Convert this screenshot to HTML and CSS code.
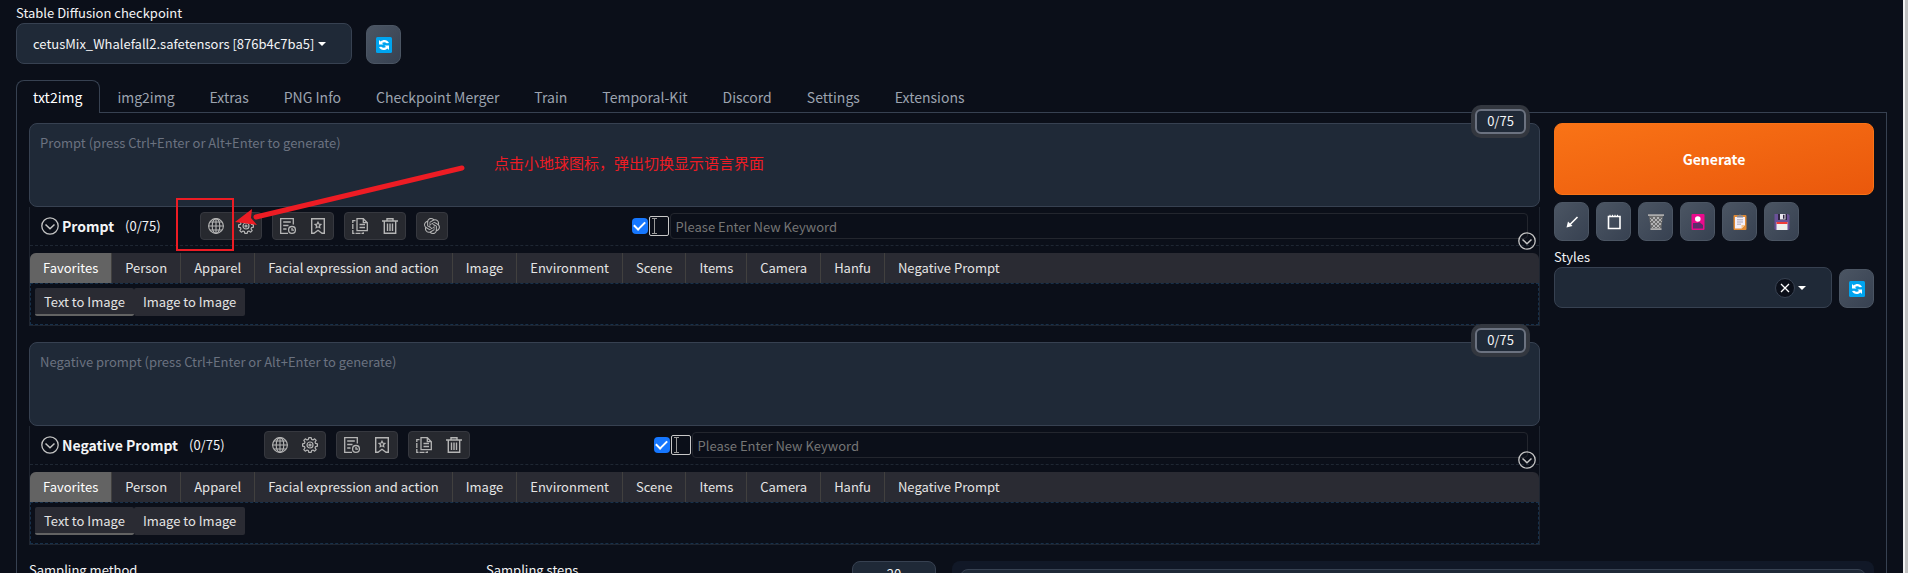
FILE: index.html
```html
<!DOCTYPE html>
<html lang="en">
<head>
<meta charset="utf-8">
<title>Stable Diffusion</title>
<link rel="stylesheet" href="styles.css">
</head>
<body>
<svg class="defs" aria-hidden="true">
  <defs>
    <symbol id="refresh" viewBox="0 0 16 16">
      <rect width="16" height="16" rx="1.500" fill="#00a4ef"/>
      <path d="M3 3v4.500h4.500L6 6C7.500 4.800 9.500 5 10.700 6.300L13 6C11.500 2.800 7.500 2 4.600 4.600Z" fill="#fff"/>
      <path d="M13 13V8.500H8.500L10 10C8.500 11.200 6.500 11 5.300 9.700L3 10C4.500 13.200 8.500 14 11.400 11.400Z" fill="#fff"/>
    </symbol>
    <symbol id="chevron" viewBox="0 0 18 18">
      <circle cx="9" cy="9" r="8.200" fill="none" stroke="#c4c4c4" stroke-width="1.300"/>
      <path d="M4.500 7.500 9 11.700l4.500-4.200" fill="none" stroke="#c4c4c4" stroke-width="1.500"/>
    </symbol>
    <symbol id="globe" viewBox="1 1 16 16">
      <g fill="none" stroke="#b5b5b5" stroke-width="1.100"><circle cx="9" cy="9" r="7.400"/><ellipse cx="9" cy="9" rx="3.800" ry="7.400"/><path d="M9 1.500v15M1.500 9h15M2.700 5h12.600M2.700 13h12.600"/></g>
    </symbol>
    <symbol id="gear" viewBox="1 1 16 16">
      <g fill="none" stroke="#b5b5b5" stroke-width="1.200" stroke-linejoin="round"><path d="M7.800 1.600h2.400l.4 1.800 1.400.6 1.700-1.200 1.500 1.500L14 6l.6 1.400 1.800.4v2.400l-1.800.4L14 12l1.200 1.700-1.500 1.500L12 14l-1.400.6-.4 1.800H7.800l-.4-1.800L6 14l-1.700 1.200-1.500-1.500L4 12l-.6-1.400-1.800-.4V7.800l1.800-.4L4 6 2.800 4.300l1.500-1.500L6 4l1.400-.6Z"/><circle cx="9" cy="9" r="3"/><circle cx="9" cy="9" r="1"/></g>
    </symbol>
    <symbol id="history" viewBox="1 1 16 16">
      <g fill="none" stroke="#b5b5b5" stroke-width="1.300"><path d="M14.300 7.500V1.700H1.700v14.600H9M4.200 5h7.600M4.200 8.500h5.300M4.200 12h3.300"/><circle cx="13" cy="12.900" r="3.400"/><path d="M13 11v2.200h2"/></g>
    </symbol>
    <symbol id="bookmark" viewBox="1 1 16 16">
      <g fill="none" stroke="#b5b5b5" stroke-width="1.400"><path d="M2.700 1.700h12.600v14.600H13l-4-3-4 3H2.700Z"/><path d="m9 5.200.9 1.800 2 .3-1.500 1.400.4 2L9 9.800l-1.800.9.400-2-1.500-1.400 2-.3Z" stroke-width="1.200"/></g>
    </symbol>
    <symbol id="copy" viewBox="1 1 16 16">
      <g fill="none" stroke="#b5b5b5" stroke-width="1.300"><path d="M6 1.700h6.300l4 4v8H6ZM8.500 7.500H14M8.500 10.500H14"/><path d="M12.300 1.700v4h4"/><path d="M4.500 3.700H1.800v12.600h10.500v-1" stroke-dasharray="5 1"/></g>
    </symbol>
    <symbol id="trash" viewBox="1 1 16 16">
      <g fill="none" stroke="#b5b5b5" stroke-width="1.400"><path d="M1 4h16M6 3.500V1.700h6v1.800M3.300 4v12.300h11.400V4M6.500 6.500v7.500M9 6.500v7.500M11.500 6.500v7.500"/></g>
    </symbol>
    <symbol id="openai" viewBox="0 0 24 24">
      <path fill="#b5b5b5" d="M22.282 9.821a5.985 5.985 0 0 0-.516-4.910 6.046 6.046 0 0 0-6.510-2.900A6.065 6.065 0 0 0 4.981 4.182a5.985 5.985 0 0 0-3.998 2.900 6.046 6.046 0 0 0 .743 7.097 5.980 5.980 0 0 0 .510 4.911 6.051 6.051 0 0 0 6.515 2.900A5.985 5.985 0 0 0 13.260 24a6.056 6.056 0 0 0 5.772-4.206 5.990 5.990 0 0 0 3.997-2.900 6.056 6.056 0 0 0-.747-7.073zM13.260 22.430a4.476 4.476 0 0 1-2.876-1.040l.141-.081 4.779-2.758a.795.795 0 0 0 .392-.681v-6.737l2.020 1.168a.071.071 0 0 1 .038.052v5.583a4.504 4.504 0 0 1-4.494 4.494zM3.600 18.304a4.470 4.470 0 0 1-.535-3.014l.142.085 4.783 2.759a.771.771 0 0 0 .780 0l5.843-3.369v2.332a.080.080 0 0 1-.033.062L9.740 19.950a4.500 4.500 0 0 1-6.140-1.646zM2.340 7.896a4.485 4.485 0 0 1 2.366-1.973V11.600a.766.766 0 0 0 .388.676l5.815 3.355-2.020 1.168a.076.076 0 0 1-.071 0l-4.830-2.786A4.504 4.504 0 0 1 2.340 7.872zm16.597 3.855-5.833-3.387L15.119 7.200a.076.076 0 0 1 .071 0l4.830 2.791a4.494 4.494 0 0 1-.676 8.105v-5.678a.790.790 0 0 0-.407-.667zm2.010-3.023-.141-.085-4.774-2.782a.776.776 0 0 0-.785 0L9.409 9.230V6.897a.066.066 0 0 1 .028-.061l4.830-2.787a4.500 4.500 0 0 1 6.680 4.660zm-12.640 4.135-2.020-1.164a.080.080 0 0 1-.038-.057V6.075a4.500 4.500 0 0 1 7.375-3.453l-.142.080L8.704 5.460a.795.795 0 0 0-.393.681zm1.097-2.365 2.602-1.500 2.607 1.500v2.999l-2.597 1.500-2.607-1.500Z"/>
    </symbol>
    <symbol id="ibeam" viewBox="0 0 20 20">
      <rect x=".5" y=".5" width="19" height="19" rx="1.500" fill="none" stroke="#c8c8c8"/>
      <path d="M3 2.500h5M3 17.500h5M5.500 2.500v15" fill="none" stroke="#9a9a9a"/>
    </symbol>
  </defs>
</svg>

<header class="checkpoint">
  <div class="field">
    <label for="ckpt">Stable Diffusion checkpoint</label>
    <div class="select-wrap">
      <select id="ckpt"><option>cetusMix_Whalefall2.safetensors [876b4c7ba5]</option></select>
      <i class="caret"></i>
    </div>
  </div>
  <button class="tool" aria-label="Refresh checkpoints"><svg><use href="#refresh"/></svg></button>
</header>

<nav class="tabs">
  <button class="tab active">txt2img</button><button class="tab">img2img</button><button class="tab">Extras</button><button class="tab">PNG Info</button><button class="tab">Checkpoint Merger</button><button class="tab">Train</button><button class="tab">Temporal-Kit</button><button class="tab">Discord</button><button class="tab">Settings</button><button class="tab">Extensions</button>
</nav>

<main class="panel">
  <div class="top">
    <div class="prompts">
      <section class="prompt">
        <div class="text-wrap">
          <textarea aria-label="Prompt" placeholder="Prompt (press Ctrl+Enter or Alt+Enter to generate)"></textarea>
          <span class="counter">0/75</span>
          <p class="note">点击小地球图标，弹出切换显示语言界面</p>
        </div>
        <div class="helper">
          <div class="bar">
            <button class="plain fold" aria-label="Fold"><svg><use href="#chevron"/></svg></button>
            <h2>Prompt</h2><span class="count">(0/75)</span>
            <div class="groups">
              <div class="group"><button class="plain" aria-label="Language"><svg><use href="#globe"/></svg></button><button class="plain" aria-label="Settings"><svg><use href="#gear"/></svg></button></div>
              <div class="group"><button class="plain" aria-label="History"><svg><use href="#history"/></svg></button><button class="plain" aria-label="Favorites"><svg><use href="#bookmark"/></svg></button></div>
              <div class="group"><button class="plain" aria-label="Copy"><svg><use href="#copy"/></svg></button><button class="plain" aria-label="Delete"><svg><use href="#trash"/></svg></button></div>
              <div class="group"><button class="plain" aria-label="ChatGPT"><svg><use href="#openai"/></svg></button></div>
            </div>
            <input class="check" type="checkbox" checked aria-label="Show input">
            <svg class="ibeam"><use href="#ibeam"/></svg>
            <input class="keyword" type="text" placeholder="Please Enter New Keyword" aria-label="New keyword">
            <button class="plain unfold" aria-label="Expand"><svg><use href="#chevron"/></svg></button>
          </div>
          <div class="cats"><button class="cat active">Favorites</button><button class="cat">Person</button><button class="cat">Apparel</button><button class="cat">Facial expression and action</button><button class="cat">Image</button><button class="cat">Environment</button><button class="cat">Scene</button><button class="cat">Items</button><button class="cat">Camera</button><button class="cat">Hanfu</button><button class="cat">Negative Prompt</button></div>
          <div class="subs"><button class="sub active">Text to Image</button><button class="sub">Image to Image</button></div>
        </div>
        <svg class="marker" viewBox="0 0 300 100" aria-hidden="true">
          <rect x="1" y="36" width="56" height="51" fill="none" stroke="#ed1c24" stroke-width="2"/>
          <path d="M286 5 80 54" stroke="#ed1c24" stroke-width="5" stroke-linecap="round"/>
          <path d="M59 59 76 46 75 55 81 62Z" fill="#ed1c24"/>
        </svg>
      </section>

      <section class="prompt">
        <div class="text-wrap">
          <textarea aria-label="Negative prompt" placeholder="Negative prompt (press Ctrl+Enter or Alt+Enter to generate)"></textarea>
          <span class="counter">0/75</span>
        </div>
        <div class="helper">
          <div class="bar">
            <button class="plain fold" aria-label="Fold"><svg><use href="#chevron"/></svg></button>
            <h2>Negative Prompt</h2><span class="count">(0/75)</span>
            <div class="groups">
              <div class="group"><button class="plain" aria-label="Language"><svg><use href="#globe"/></svg></button><button class="plain" aria-label="Settings"><svg><use href="#gear"/></svg></button></div>
              <div class="group"><button class="plain" aria-label="History"><svg><use href="#history"/></svg></button><button class="plain" aria-label="Favorites"><svg><use href="#bookmark"/></svg></button></div>
              <div class="group"><button class="plain" aria-label="Copy"><svg><use href="#copy"/></svg></button><button class="plain" aria-label="Delete"><svg><use href="#trash"/></svg></button></div>
            </div>
            <input class="check" type="checkbox" checked aria-label="Show input">
            <svg class="ibeam"><use href="#ibeam"/></svg>
            <input class="keyword" type="text" placeholder="Please Enter New Keyword" aria-label="New keyword">
            <button class="plain unfold" aria-label="Expand"><svg><use href="#chevron"/></svg></button>
          </div>
          <div class="cats"><button class="cat active">Favorites</button><button class="cat">Person</button><button class="cat">Apparel</button><button class="cat">Facial expression and action</button><button class="cat">Image</button><button class="cat">Environment</button><button class="cat">Scene</button><button class="cat">Items</button><button class="cat">Camera</button><button class="cat">Hanfu</button><button class="cat">Negative Prompt</button></div>
          <div class="subs"><button class="sub active">Text to Image</button><button class="sub">Image to Image</button></div>
        </div>
      </section>
    </div>

    <aside class="actions">
      <button class="generate">Generate</button>
      <div class="tools">
        <button class="tool" aria-label="Read parameters"><svg viewBox="0 0 16 16"><path d="M13.500 3 5 11.500" stroke="#fff" stroke-width="1.600"/><path d="M2.500 13.500 4 7.500 8.500 12Z" fill="#fff"/></svg></button>
        <button class="tool" aria-label="Paste"><svg viewBox="0 0 16 16"><path d="M2.500 2.500h11.500v12h-11.500Z" fill="none" stroke="#fff" stroke-width="1.600"/><path d="M4 .8v2M6.500.8v2M9 .8v2M11.500.8v2" stroke="#fff"/></svg></button>
        <button class="tool" aria-label="Clear"><svg viewBox="0 0 16 16"><path d="M1 1.500h14L13.200 15.500H2.800Z" fill="#6d6d6d"/><path d="M2 4 12 14M5 3l8 8M9 3l5 5M3 9l5 5M14 4 4 14M11 3 3 11M7 3 2 8M13 9l-5 5" stroke="#c4c4c4" stroke-width=".8"/><path d="M0 1.200h16M2.500 15.200h11" stroke="#ababab" stroke-width="1.800"/></svg></button>
        <button class="tool" aria-label="Extra networks"><svg viewBox="0 0 16 16"><rect x="1.500" width="13" height="16" rx="1" fill="#eb0a8c"/><path d="M3 9h5l1-1 4 3v3.500H3Z" fill="#5b2d6b"/><circle cx="7.800" cy="5" r="2.800" fill="#fff"/></svg></button>
        <button class="tool" aria-label="Apply styles"><svg viewBox="0 0 16 16"><rect x="1.500" y="1" width="13" height="15" rx="1" fill="#e08a35"/><path d="M3 3h10v8l-3.500 3.500H3Z" fill="#f3eef8"/><path d="M13 11H9.500v3.500Z" fill="#f6c58d"/><path d="M5 5.800h6M5 8h6M5 10.200h4" stroke="#aaa5b5"/><path d="M5 3.500V1.500h2C7 0 9 0 9 1.500h2v2Z" fill="#8c8c92"/></svg></button>
        <button class="tool" aria-label="Save style"><svg viewBox="0 0 16 16"><path d="M1 0h13l1.500 1.500V15L14.500 16H1.500L.5 15V.5Z" fill="#6b5199"/><path d="M4 0h9v6H4Z" fill="#2d2440"/><path d="M6 0h5.500v5.500H6Z" fill="#e9e6ee"/><path d="M9 .8h1.500v4H9Z" fill="#2d2440"/><path d="M2.500 8h11v8h-11Z" fill="#eee"/><path d="M2.500 8h11v2h-11Z" fill="#f03a3a"/></svg></button>
      </div>
      <div class="styles-row">
        <div class="field">
          <label for="styles">Styles</label>
          <div class="select-wrap">
            <select id="styles"><option></option></select>
            <button class="clear" aria-label="Clear styles"><svg viewBox="0 0 10 10"><path d="m1 1 8 8M9 1 1 9" stroke="#fff" stroke-width="1.300"/></svg></button>
            <i class="caret"></i>
          </div>
        </div>
        <button class="tool" aria-label="Refresh styles"><svg><use href="#refresh"/></svg></button>
      </div>
    </aside>
  </div>

  <div class="settings">
    <span class="method">Sampling method</span>
    <label class="steps" for="steps">Sampling steps</label>
    <input class="number" id="steps" type="text" value="20">
    <div class="gallery"><div class="canvas"></div></div>
  </div>
</main>
<div class="scrollbar" aria-hidden="true"></div>
</body>
</html>
```
FILE: styles.css
```css
* { box-sizing: border-box; }
html { height: 100%; overflow: hidden; }
body {
  margin: 0; padding: 4px 21px 0 16px; height: 100%; overflow: hidden;
  background: #0b0f19; color: #f3f4f6;
  font: 13px/18px "Noto Sans CJK SC", sans-serif;
}
button, input, select, textarea { font: inherit; color: inherit; margin: 0; }
button { border: 0; padding: 0; background: none; white-space: nowrap; }
svg { display: block; }
.defs { position: absolute; width: 0; height: 0; }

.checkpoint { display: flex; align-items: flex-end; gap: 14px; }
.checkpoint .field { width: 336px; }
.field label { display: block; height: 19px; }
.select-wrap { position: relative; }
select {
  display: block; width: 100%; height: 41px; padding: 0 16px;
  appearance: none; background: #1f2937; border: 1px solid #374151; border-radius: 8px;
}
.caret {
  position: absolute; right: 26px; top: 19px;
  border: 4px solid transparent; border-top-color: #fff; border-bottom: 0;
}
.tool {
  display: grid; place-items: center; width: 35px; height: 39px; flex: none;
  background: linear-gradient(to bottom right, #4b5563, #374151);
  border: 1px solid #4b5563; border-radius: 8px;
}
.tool svg { width: 16px; height: 16px; }

.tabs { display: flex; margin-top: 16px; }
.tab {
  height: 32px; padding: 0 17px 0 16px; border: 1px solid transparent; border-bottom: 0;
  border-radius: 8px 8px 0 0; color: #9ca3af; font-size: 14px;
}
.tab.active { position: relative; margin-bottom: -1px; height: 33px; background: #0b0f19; border-color: #374151; color: #fff; }

.panel { border: 1px solid #374151; padding: 10px 12px; min-height: 600px; }
.top { display: flex; gap: 14px; }
.prompts { flex: 1; display: grid; gap: 16px; }
.prompt { position: relative; }
.text-wrap { position: relative; }
textarea {
  display: block; width: 100%; height: 84px; padding: 10px; resize: none;
  background: #1f2937; border: 1px solid #374151; border-radius: 8px;
}
::placeholder { color: #6b7280; opacity: 1; }
.counter {
  position: absolute; right: 14px; top: -14px; width: 51px; height: 25px; padding: 1px 0; text-align: center;
  background: #1f2937; border: 2px solid #6b7280; border-radius: 6px; box-shadow: 0 0 0 4px #33373f;
}
.note { position: absolute; left: 465px; top: 31px; margin: 0; color: #ed1c24; font-size: 15px; white-space: nowrap; }

.helper { border: 1px solid #1f2530; border-top: 0; }
.bar {
  position: relative; display: flex; align-items: center; height: 39px; padding: 0 11px;
  border-bottom: 1px dashed #1f2733;
}
.fold svg, .unfold svg { width: 18px; height: 18px; }
h2 { margin: 0 0 0 3px; font-size: 14px; line-height: 20px; font-weight: 700; white-space: nowrap; }
.count { margin-left: 11px; }
.groups { display: flex; gap: 10px; margin: 0 184px 0 39px; }
.group {
  display: flex; gap: 14px; height: 28px; padding: 0 7px; align-items: center;
  background: #27292f; border: 1px solid #36383f; border-radius: 4px;
}
.group svg { width: 16px; height: 16px; }
.check {
  appearance: none; width: 16px; height: 16px; border-radius: 4px; flex: none;
  background: #1677ff; display: grid; place-items: center;
}
.check::after {
  content: ""; width: 9px; height: 5px; margin-top: -3px;
  border: solid #fff; border-width: 0 0 2px 2px; transform: rotate(-45deg);
}
.ibeam { width: 20px; height: 20px; margin: 0 1px; flex: none; }
.keyword {
  flex: 1; min-width: 0; height: 26px; padding: 0 5px;
  background: transparent; border: 1px solid #23262e; border-radius: 4px;
}
.keyword::placeholder { color: #757575; }
.unfold { position: absolute; right: 3px; bottom: -5px; }

.cats { display: flex; margin-top: 7px; background: #2a2b33; border-radius: 6px 6px 0 0; overflow: hidden; }
.cat { height: 30px; padding: 0 13px; border-right: 1px solid #41403f; color: #e4e4e4; }
.cat:last-child { border-right: 0; }
.cat.active { background: #636363; color: #fff; }
.subs { display: flex; height: 42px; padding: 4px; border: 1px dashed #17304a; }
.sub { height: 28px; padding: 0 9px; background: #2a2b33; border-radius: 2px; color: #e4e4e4; }
.sub.active { border-bottom: 2px solid #636363; padding-top: 2px; }
.marker { position: absolute; left: 147px; top: 40px; width: 300px; height: 100px; pointer-events: none; }

.actions { width: 320px; flex: none; }
.generate {
  display: block; width: 100%; height: 72px; font-size: 14px; font-weight: 700; color: #fff;
  background: linear-gradient(to bottom right, #f97316, #ea580c); border: 1px solid #f97316; border-radius: 8px;
}
.tools { display: flex; gap: 7px; margin: 7px 0; }
.styles-row { display: flex; align-items: flex-end; gap: 7px; }
.styles-row .field { flex: 1; }
.clear {
  position: absolute; right: 37px; top: 11px; display: grid; place-items: center;
  width: 20px; height: 20px; background: #0b0f19; border: 1px solid #374151; border-radius: 50%;
}
.clear svg { width: 10px; height: 10px; }

.settings { display: flex; align-items: flex-start; margin-top: 16px; }
.method { width: 457px; }
.steps { width: 366px; }
.number {
  width: 84px; height: 24px; text-align: center; padding: 0;
  background: #1f2937; border: 1px solid #374151; border-radius: 8px 8px 0 0;
}
.gallery { flex: 1; height: 60px; margin-left: 16px; padding: 8px; background: #111827; border-radius: 8px 8px 0 0; }
.canvas { height: 100%; background: #1f2937; border: 1px solid #374151; border-radius: 8px 8px 0 0; }
.scrollbar { position: fixed; top: 0; right: 0; bottom: 0; width: 5px; background: #c1c1c1; border-left: 2px solid #f1f1f1; }
```
